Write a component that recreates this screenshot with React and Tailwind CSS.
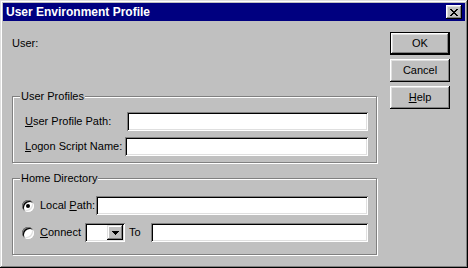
const CloseGlyph = () => (
  <svg width="8" height="7" viewBox="0 0 8 7" shapeRendering="crispEdges">
    <path
      fill="#000"
      d="M0 0h2v1H0zM6 0h2v1H6zM1 1h2v1H1zM5 1h2v1H5zM2 2h4v1H2zM3 3h2v1H3zM2 4h4v1H2zM1 5h2v1H1zM5 5h2v1H5zM0 6h2v1H0zM6 6h2v1H6z"
    />
  </svg>
);

const Field = ({ className = "" }) => (
  <div
    className={`h-[19px] bg-white shadow-[inset_1px_1px_#808080,inset_-1px_-1px_#fff,inset_2px_2px_#000,inset_-2px_-2px_#dfdfdf] ${className}`}
  />
);

const Radio = ({ checked }) => (
  <div className="relative w-[12px] h-[12px] shrink-0 rounded-full bg-white shadow-[inset_1px_1px_#808080,inset_-1px_-1px_#fff,inset_2px_2px_#000,inset_-2px_-2px_#dfdfdf]">
    {checked && (
      <div className="absolute left-[4px] top-[4px] w-[4px] h-[4px] rounded-full bg-black" />
    )}
  </div>
);

const Button = ({ children, isDefault }) => (
  <div
    className={`w-[60px] h-[23px] flex items-center justify-center ${
      isDefault
        ? "shadow-[inset_0_0_0_1px_#000,inset_-2px_-2px_#000,inset_2px_2px_#fff,inset_-3px_-3px_#808080,inset_3px_3px_#dfdfdf]"
        : "shadow-[inset_-1px_-1px_#000,inset_1px_1px_#fff,inset_-2px_-2px_#808080,inset_2px_2px_#dfdfdf]"
    }`}
  >
    {children}
  </div>
);

const GroupBox = ({ title, children, className = "" }) => (
  <fieldset
    className={`m-0 p-0 min-w-0 border border-[#808080] shadow-[1px_1px_0_#fff,inset_1px_1px_0_#fff] ${className}`}
  >
    <legend className="ml-[7px] px-[1px] bg-[#c0c0c0]">{title}</legend>
    {children}
  </fieldset>
);

export default function App() {
  return (
    <div className="w-[468px] h-[268px] bg-[#c0c0c0] p-[3px] flex flex-col shadow-[inset_-1px_-1px_#000,inset_1px_1px_#dfdfdf,inset_-2px_-2px_#808080,inset_2px_2px_#fff] font-['Liberation_Sans',Arial,sans-serif] text-[11px] leading-[13px] text-black">
      <div className="h-[18px] bg-[#000080] flex items-center justify-between pl-[3px] pr-[3px]">
        <span className="font-bold text-white text-[12px] leading-[14px]">User Environment Profile</span>
        <div className="w-[16px] h-[14px] flex items-center justify-center bg-[#c0c0c0] shadow-[inset_-1px_-1px_#000,inset_1px_1px_#fff,inset_-2px_-2px_#808080,inset_2px_2px_#dfdfdf]">
          <CloseGlyph />
        </div>
      </div>

      <div className="flex pl-[9px]">
        <div className="w-[365px] flex flex-col">
          <div className="mt-[16px]">User:</div>

          <GroupBox title="User Profiles" className="mt-[40px]">
            <div className="flex flex-col gap-[6px] pl-[12px] pr-[8px] pt-[9px] pb-[6px]">
              <div className="flex items-center">
                <span className="w-[102px] shrink-0">
                  <u>U</u>ser Profile Path:
                </span>
                <Field className="flex-1" />
              </div>
              <div className="flex items-center">
                <span className="w-[100px] shrink-0">
                  <u>L</u>ogon Script Name:
                </span>
                <Field className="flex-1" />
              </div>
            </div>
          </GroupBox>

          <GroupBox title="Home Directory" className="mt-[9px]">
            <div className="flex flex-col gap-[8px] pl-[9px] pr-[8px] pt-[11px] pb-[12px]">
              <div className="flex items-center">
                <Radio checked />
                <span className="ml-[6px] w-[56px] shrink-0">
                  Local <u>P</u>ath:
                </span>
                <Field className="flex-1" />
              </div>
              <div className="flex items-center">
                <Radio />
                <span className="ml-[6px] w-[45px] shrink-0">
                  <u>C</u>onnect
                </span>
                <div className="w-[40px] h-[19px] shrink-0 bg-white flex justify-end p-[2px] shadow-[inset_1px_1px_#808080,inset_-1px_-1px_#fff,inset_2px_2px_#000,inset_-2px_-2px_#dfdfdf]">
                  <div className="w-[16px] h-[15px] bg-[#c0c0c0] flex items-center justify-center shadow-[inset_-1px_-1px_#000,inset_1px_1px_#dfdfdf,inset_-2px_-2px_#808080,inset_2px_2px_#fff]">
                    <svg width="7" height="4" viewBox="0 0 7 4" shapeRendering="crispEdges">
                      <path fill="#000" d="M0 0h7v1H0zM1 1h5v1H1zM2 2h3v1H2zM3 3h1v1H3z" />
                    </svg>
                  </div>
                </div>
                <span className="ml-[4px] w-[22px] shrink-0">To</span>
                <Field className="flex-1" />
              </div>
            </div>
          </GroupBox>
        </div>

        <div className="ml-[13px] pt-[11px] flex flex-col gap-[4px]">
          <Button isDefault>OK</Button>
          <Button>Cancel</Button>
          <Button>
            <span>
              <u>H</u>elp
            </span>
          </Button>
        </div>
      </div>
    </div>
  );
}
